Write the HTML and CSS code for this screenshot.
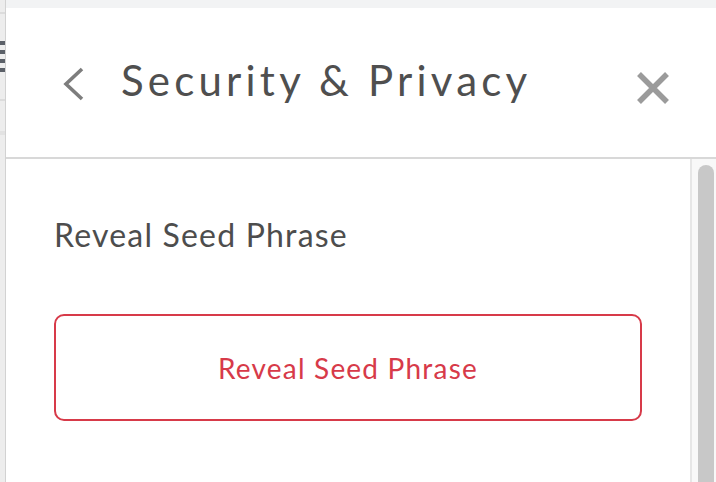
FILE: index.html
```html
<!DOCTYPE html>
<html lang="en">
<head>
<meta charset="utf-8">
<title>Security &amp; Privacy</title>
<link rel="stylesheet" href="styles.css">
</head>
<body>
<div class="page">
  <div class="edge">
    <div class="edge-line edge-line-top"></div>
    <div class="burger">
      <span></span><span></span><span></span><span></span>
    </div>
    <div class="edge-line edge-line-mid"></div>
    <div class="edge-line edge-line-low"></div>
  </div>
  <div class="panel">
    <div class="topband"></div>
    <header class="header">
      <button class="back" aria-label="Back">
        <svg width="22" height="34" viewBox="0 0 22 34"><path d="M20 2 L4 17 L20 32" fill="none" stroke="#7d7d7d" stroke-width="3.6" stroke-linejoin="miter" stroke-linecap="butt"/></svg>
      </button>
      <h1 class="title">Security &amp; Privacy</h1>
      <button class="close" aria-label="Close">
        <svg width="34" height="34" viewBox="0 0 34 34"><path d="M3 3 L31 31 M31 3 L3 31" fill="none" stroke="#9b9b9b" stroke-width="5.5" stroke-linecap="butt"/></svg>
      </button>
    </header>
    <div class="body">
      <main class="content">
        <div class="label">Reveal Seed Phrase</div>
        <button class="reveal">Reveal Seed Phrase</button>
      </main>
      <div class="scrollbar"><div class="thumb"></div></div>
    </div>
  </div>
</div>
</body>
</html>
```

FILE: styles.css
```css
* { box-sizing: border-box; }
html, body { margin: 0; padding: 0; height: 100%; overflow: hidden; background: #ffffff; }
body { font-family: "Lato", "Liberation Sans", sans-serif; }

.page { display: flex; height: 482px; overflow: hidden; }

.edge {
  width: 6px;
  flex: none;
  background: #ededed;
  border-right: 1px solid #d2d2d2;
  display: flex;
  flex-direction: column;
}
.edge-line { height: 2px; background: #dcdcdc; }
.edge-line-top { margin-top: 12px; }
.burger { margin-top: 27px; display: flex; flex-direction: column; gap: 5px; }
.burger span { display: block; height: 4px; background: #5b6068; }
.edge-line-mid { margin-top: 27px; }
.edge-line-low { margin-top: 30px; height: 4px; background: #e2e2e2; }

.panel { flex: 1; display: flex; flex-direction: column; min-width: 0; overflow: hidden; }
.topband { height: 8px; background: #f2f3f4; flex: none; }

.header {
  height: 151px;
  flex: none;
  border-bottom: 2px solid #d8d8d8;
  display: flex;
  align-items: center;
  padding: 0 46px 0 56px;
}
.back, .close { background: none; border: 0; padding: 0; margin: 0; display: flex; cursor: pointer; }
.back { margin-top: 3px; }
.close { margin-top: 11px; margin-left: auto; }
.title {
  margin: 0 0 5px 37px;
  font-weight: 400;
  font-size: 42px;
  line-height: 42px;
  letter-spacing: 4.2px;
  color: #4f4f4f;
  white-space: nowrap;
}

.body { flex: 1; display: flex; min-height: 0; overflow: hidden; }
.content { flex: 1; padding: 60px 48px 0 48px; }
.label { font-size: 32px; line-height: 32px; letter-spacing: 1.2px; color: #4d4d4d; }
.reveal {
  margin-top: 63px;
  width: 100%;
  height: 107px;
  border: 2px solid #d73a49;
  border-radius: 10px;
  background: #ffffff;
  color: #d73a49;
  font-family: inherit;
  font-size: 28px;
  line-height: 28px;
  letter-spacing: 1.2px;
  display: flex;
  align-items: center;
  justify-content: center;
}

.scrollbar {
  width: 26px;
  flex: none;
  background: #f8f8f8;
  border-left: 2px solid #e6e6e6;
  padding: 6px 2px 0 6px;
}
.thumb { height: 330px; background: #c8c8c8; border-radius: 8px 8px 0 0; }
```
